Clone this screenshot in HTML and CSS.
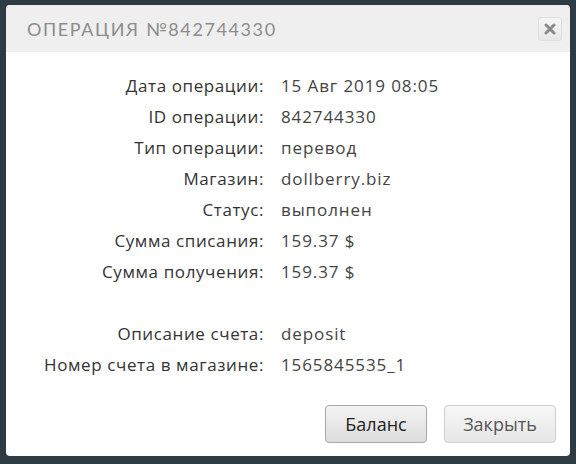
FILE: index.html
```html
<!DOCTYPE html>
<html lang="ru">
<head>
<meta charset="utf-8">
<link rel="stylesheet" href="styles.css">
</head>
<body>
<div class="dialog">
  <div class="header">
    <div class="title">ОПЕРАЦИЯ №842744330</div>
    <button class="close" type="button" aria-label="close">
      <svg width="12" height="12" viewBox="0 0 12 12"><path d="M2 2 L10 10 M10 2 L2 10" stroke="#8a8a8a" stroke-width="3" stroke-linecap="round"/></svg>
    </button>
  </div>
  <div class="content">
    <div class="rows">
      <div class="label">Дата операции:</div><div class="value">15 Авг 2019 08:05</div>
      <div class="label">ID операции:</div><div class="value">842744330</div>
      <div class="label">Тип операции:</div><div class="value">перевод</div>
      <div class="label">Магазин:</div><div class="value">dollberry.biz</div>
      <div class="label">Статус:</div><div class="value">выполнен</div>
      <div class="label">Сумма списания:</div><div class="value">159.37 $</div>
      <div class="label">Сумма получения:</div><div class="value">159.37 $</div>
      <div class="label spacer"></div><div class="value spacer"></div>
      <div class="label">Описание счета:</div><div class="value">deposit</div>
      <div class="label">Номер счета в магазине:</div><div class="value">1565845535_1</div>
    </div>
    <div class="buttons">
      <button class="btn primary" type="button">Баланс</button>
      <button class="btn secondary" type="button">Закрыть</button>
    </div>
  </div>
</div>
</body>
</html>
```
FILE: styles.css
```css
html, body {
  margin: 0;
  padding: 0;
}
body {
  background: #2f3b43;
  width: 576px;
  height: 464px;
  overflow: hidden;
  padding-top: 5px;
  box-sizing: border-box;
}
.dialog {
  margin-left: 6px;
  width: 564px;
  height: 451px;
  background: #fff;
  border-radius: 4px;
  overflow: hidden;
  display: flex;
  flex-direction: column;
}
.header {
  height: 47px;
  background: #f0efef;
  display: flex;
  align-items: center;
  justify-content: space-between;
  padding: 0 8px 0 21px;
  flex: none;
}
.title {
  font-family: "Lato", "DejaVu Sans", sans-serif;
  font-size: 18px;
  letter-spacing: 1.6px;
  color: #8c8c8c;
  font-weight: 400;
}
.close {
  width: 24px;
  height: 24px;
  padding: 0;
  border: 1px solid #e0dede;
  border-radius: 3px;
  background: linear-gradient(#f6f6f6, #e8e8e8);
  display: flex;
  align-items: center;
  justify-content: center;
}
.content {
  flex: 1;
  display: flex;
  flex-direction: column;
  padding-top: 18px;
}
.rows {
  display: grid;
  grid-template-columns: 258px auto;
  column-gap: 17px;
  grid-auto-rows: 31px;
  align-items: center;
  font-family: "Open Sans", "Noto Sans", sans-serif;
  font-size: 17px;
}
.label {
  text-align: right;
  color: #333;
  letter-spacing: 0.6px;
}
.value {
  color: #444;
  letter-spacing: 0.9px;
}
.buttons {
  display: flex;
  justify-content: flex-end;
  gap: 17px;
  padding-right: 14px;
  margin-top: 25px;
}
.btn {
  height: 38px;
  border-radius: 4px;
  font-family: "Open Sans", "DejaVu Sans", sans-serif;
  font-size: 18px;
  padding: 0;
}
.primary {
  width: 102px;
  border: 1px solid #a8a8a8;
  background: linear-gradient(#f4f4f4, #dcdcdc);
  color: #222;
}
.secondary {
  width: 112px;
  border: 1px solid #cfcfcf;
  background: linear-gradient(#f7f7f7, #e6e6e6);
  color: #555;
}
```
